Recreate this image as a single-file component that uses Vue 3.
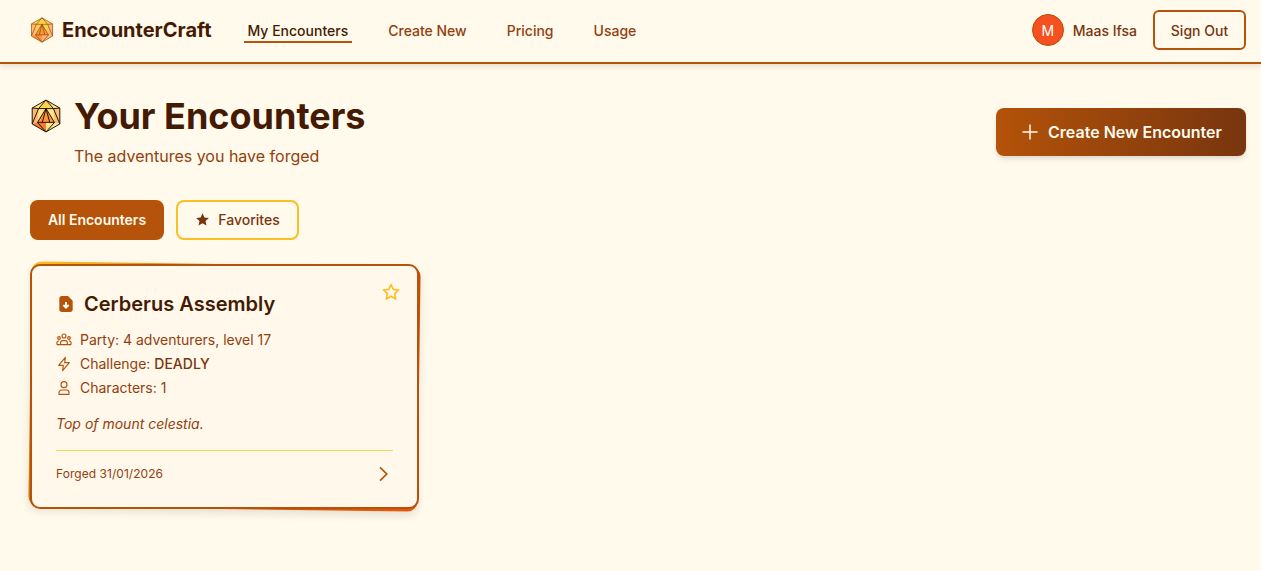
<template>
  <div class="page">
    <header class="topbar">
      <div class="brand">
        <svg class="d20 d20-small" viewBox="0 0 32 32">
          <polygon points="16,1 29,8.500 29,23.500 16,31 3,23.500 3,8.500" fill="#fcd34d" />
          <polygon points="3,8.500 9,9 8,22 3,23.500" fill="#fdba74" />
          <polygon points="29,8.500 23,9 24,22 29,23.500" fill="#fdba74" />
          <polygon points="16,9 24,22 8,22" fill="#fb923c" />
          <polygon points="8,22 16,22 16,31 3,23.500" fill="#fb923c" />
          <polygon points="16,22 24,22 29,23.500 16,31" fill="#fdba74" />
          <g class="d20-lines">
            <polygon points="16,1 29,8.500 29,23.500 16,31 3,23.500 3,8.500" />
            <path d="M16 1 9 9h14ZM9 9 3 8.500M23 9l6-.5M9 9 3 23.500M23 9l6 14.500M16 9 8 22h16ZM8 22l8 9 8-9M16 9l-3.500 13M16 9l3.500 13" />
          </g>
        </svg>
        <span class="brand-name">EncounterCraft</span>
      </div>
      <nav class="nav">
        <a v-for="link in links" :key="link" class="nav-link" :class="{ active: link === 'My Encounters' }">{{ link }}</a>
      </nav>
      <div class="account">
        <span class="avatar">M</span>
        <span class="user-name">Maas Ifsa</span>
        <button class="sign-out">Sign Out</button>
      </div>
    </header>

    <main class="content">
      <div class="page-head">
        <div>
          <div class="title-row">
            <svg class="d20 d20-large" viewBox="0 0 32 32">
              <polygon points="16,1 29,8.500 29,23.500 16,31 3,23.500 3,8.500" fill="#fde68a" />
              <polygon points="16,1 23,9 9,9" fill="#fcd34d" />
              <polygon points="3,8.500 9,9 8,22 3,23.500" fill="#fdba74" />
              <polygon points="29,8.500 23,9 24,22 29,23.500" fill="#fdba74" />
              <polygon points="16,9 24,22 8,22" fill="#fb923c" />
              <polygon points="8,22 16,22 16,31 3,23.500" fill="#fb7a2c" />
              <polygon points="16,22 24,22 29,23.500 16,31" fill="#fde68a" />
              <g class="d20-lines">
                <polygon points="16,1 29,8.500 29,23.500 16,31 3,23.500 3,8.500" />
                <path d="M16 1 9 9h14ZM9 9 3 8.500M23 9l6-.5M9 9 3 23.500M23 9l6 14.500M16 9 8 22h16ZM8 22l8 9 8-9M16 9l-3.500 13M16 9l3.500 13" />
              </g>
            </svg>
            <h1>Your Encounters</h1>
          </div>
          <p class="subtitle">The adventures you have forged</p>
        </div>
        <button class="create">
          <svg viewBox="0 0 24 24" class="plus"><path d="M12 3v18M3 12h18" /></svg>
          Create New Encounter
        </button>
      </div>

      <div class="tabs">
        <button class="tab tab-active">All Encounters</button>
        <button class="tab tab-fav">
          <svg viewBox="0 0 24 24" class="star-solid"><path d="M12 2l3 6.600 7.200.9-5.300 4.900 1.400 7.100L12 18l-6.300 3.500 1.400-7.100L1.800 9.500 9 8.600Z" /></svg>
          Favorites
        </button>
      </div>

      <article class="card">
        <div class="card-inner">
          <svg class="star-line" viewBox="0 0 24 24"><path d="M12 3l2.700 5.800 6.300.8-4.600 4.400 1.200 6.300L12 17.200l-5.600 3.100 1.200-6.300L3 9.600l6.300-.8Z" /></svg>
          <div class="card-title">
            <svg class="file-icon" viewBox="0 0 24 24">
              <path class="file-body" d="M6 0h9l7 7v13a4 4 0 0 1-4 4H6a4 4 0 0 1-4-4V4a4 4 0 0 1 4-4Z" />
              <path class="file-arrow" d="M12 9v8M8 13.500l4 4 4-4" />
            </svg>
            <h2>Cerberus Assembly</h2>
          </div>
          <ul class="stats">
            <li>
              <svg class="stat-icon" viewBox="0 0 24 24"><circle cx="12" cy="6" r="3" /><circle cx="4.500" cy="9" r="2" /><circle cx="19.500" cy="9" r="2" /><path d="M7 19v-3a3 3 0 0 1 3-3h4a3 3 0 0 1 3 3v3ZM1.500 19v-3.500a2.500 2.500 0 0 1 3-2M22.500 19v-3.500a2.500 2.500 0 0 0-3-2M1.500 19h21" /></svg>
              Party: 4 adventurers, level 17
            </li>
            <li>
              <svg class="stat-icon" viewBox="0 0 24 24"><path d="M14 2 4 14h7l-1 8 10-12h-7Z" /></svg>
              <span>Challenge: <strong>DEADLY</strong></span>
            </li>
            <li>
              <svg class="stat-icon" viewBox="0 0 24 24"><circle cx="12" cy="7" r="4.500" /><path d="M4.500 21.500v-2.500a4 4 0 0 1 4-4h7a4 4 0 0 1 4 4v2.500Z" /></svg>
              Characters: 1
            </li>
          </ul>
          <p class="note">Top of mount celestia.</p>
          <div class="card-foot">
            <span>Forged 31/01/2026</span>
            <svg class="chevron" viewBox="0 0 24 24"><path d="M8.500 4l8 8-8 8" /></svg>
          </div>
        </div>
      </article>
    </main>
  </div>
</template>

<script setup>
const links = ['My Encounters', 'Create New', 'Pricing', 'Usage']
</script>

<style>
html, body {
  background: #fffaec;
}
</style>

<style scoped>
.page {
  min-height: 571px;
  background: #fffaec;
  font-family: Inter, "Liberation Sans", sans-serif;
  color: #451a03;
}

.topbar {
  display: flex;
  align-items: center;
  height: 62px;
  padding: 0 15px 0 30px;
  border-bottom: 2px solid #b45309;
  box-shadow: 0 2px 6px rgba(69, 26, 3, 0.14);
}

.brand {
  display: flex;
  align-items: center;
  gap: 7px;
  margin-top: -2px;
}

.d20 {
  display: block;
  flex: none;
}

.d20-small {
  width: 26px;
  height: 26px;
  margin-left: -1px;
}

.d20-large {
  width: 34px;
  height: 34px;
  margin-left: -1px;
}

.d20-lines {
  fill: none;
  stroke: #92400e;
  stroke-width: 0.8;
  stroke-linejoin: round;
}

.d20-large .d20-lines {
  stroke: #1c0d02;
  stroke-width: 0.9;
}

.brand-name {
  font-size: 20px;
  font-weight: 700;
  line-height: 28px;
}

.nav {
  display: flex;
  gap: 32px;
  margin: 2px 0 0 32px;
}

.nav-link {
  padding: 0 4px;
  font-size: 14px;
  line-height: 20px;
  font-weight: 500;
  color: #92400e;
  border-bottom: 2px solid transparent;
}

.nav-link.active {
  color: #451a03;
  border-bottom-color: #b45309;
}

.account {
  display: flex;
  align-items: center;
  margin: -2px 0 0 auto;
}

.avatar {
  display: flex;
  align-items: center;
  justify-content: center;
  width: 32px;
  height: 32px;
  box-sizing: border-box;
  border: 1px solid #b45309;
  border-radius: 50%;
  background: #f4511e;
  color: #fff;
  font-size: 14px;
}

.user-name {
  margin-left: 9px;
  font-size: 14px;
  font-weight: 500;
  color: #78350f;
}

.sign-out {
  width: 93px;
  height: 40px;
  margin-left: 16px;
  border: 2px solid #b45309;
  border-radius: 6px;
  background: transparent;
  font: 500 14px Inter, sans-serif;
  color: #78350f;
}

.content {
  padding: 0 15px 0 30px;
}

.page-head {
  display: flex;
  justify-content: space-between;
  align-items: flex-start;
  padding-top: 32px;
}

.title-row {
  display: flex;
  align-items: center;
  gap: 11px;
}

h1 {
  margin: 0;
  font-size: 36px;
  line-height: 40px;
  font-weight: 700;
}

.subtitle {
  margin: 8px 0 0 44px;
  font-size: 16px;
  line-height: 24px;
  color: #92400e;
}

.create {
  display: flex;
  align-items: center;
  justify-content: center;
  gap: 8px;
  width: 250px;
  height: 48px;
  margin-top: 12px;
  border: 0;
  border-radius: 8px;
  background: linear-gradient(to right, #b45309, #78350f);
  box-shadow: 0 4px 6px -1px rgba(0, 0, 0, 0.1), 0 2px 4px -2px rgba(0, 0, 0, 0.1);
  font: 600 16px Inter, sans-serif;
  color: #fffbeb;
}

.plus {
  width: 20px;
  height: 20px;
  fill: none;
  stroke: #fffbeb;
  stroke-width: 1.8;
}

.tabs {
  display: flex;
  gap: 12px;
  margin-top: 32px;
}

.tab {
  height: 40px;
  padding-bottom: 2px;
  border-radius: 8px;
  font: 600 14px Inter, sans-serif;
}

.tab-active {
  width: 134px;
  border: 0;
  background: #b45309;
  color: #fffbeb;
}

.tab-fav {
  display: flex;
  align-items: center;
  justify-content: center;
  gap: 8px;
  width: 123px;
  border: 2px solid #fbbf24;
  background: transparent;
  font-weight: 500;
  color: #78350f;
}

.star-solid {
  width: 15px;
  height: 15px;
  fill: #78350f;
}

.card {
  position: relative;
  width: 389px;
  height: 245px;
  margin-top: 24px;
}

.card::before {
  content: "";
  position: absolute;
  inset: 0;
  border-radius: 10px;
  background: linear-gradient(135deg, #fbbf24, #b45309 55%, #ea580c);
  transform: rotate(0.8deg);
  box-shadow: 0 4px 8px rgba(69, 26, 3, 0.12);
}

.card-inner {
  position: relative;
  box-sizing: border-box;
  height: 100%;
  padding: 24px 24px 0;
  border: 2px solid #b45309;
  border-radius: 10px;
  background: #fff8eb;
}

.star-line {
  position: absolute;
  top: 16px;
  right: 16px;
  width: 20px;
  height: 20px;
  fill: none;
  stroke: #fbbf24;
  stroke-width: 2;
  stroke-linejoin: round;
}

.card-title {
  display: flex;
  align-items: center;
  gap: 10px;
}

.file-icon {
  width: 16px;
  height: 18px;
  margin-left: 2px;
}

.file-body {
  fill: #b45309;
}

.file-arrow {
  fill: none;
  stroke: #fff8eb;
  stroke-width: 3;
}

h2 {
  margin: 0;
  font-size: 20px;
  line-height: 28px;
  font-weight: 600;
}

.stats {
  margin: 10px 0 0;
  padding: 0;
  list-style: none;
  font-size: 14px;
  line-height: 24px;
  color: #92400e;
}

.stats li {
  display: flex;
  align-items: center;
  gap: 8px;
}

.stat-icon {
  width: 16px;
  height: 16px;
  fill: none;
  stroke: #b45309;
  stroke-width: 1.7;
  stroke-linejoin: round;
  flex: none;
}

.stats strong {
  font-weight: 500;
  color: #78350f;
}

.note {
  margin: 12px 0 0;
  font-size: 14px;
  line-height: 24px;
  font-style: italic;
  color: #92400e;
}

.card-foot {
  display: flex;
  align-items: center;
  justify-content: space-between;
  margin-top: 14px;
  padding-top: 13px;
  border-top: 1px solid #fcd34d;
  font-size: 12px;
  line-height: 20px;
  letter-spacing: 0.05px;
  color: #92400e;
}

.chevron {
  width: 20px;
  height: 20px;
  fill: none;
  stroke: #b45309;
  stroke-width: 2;
}
</style>
